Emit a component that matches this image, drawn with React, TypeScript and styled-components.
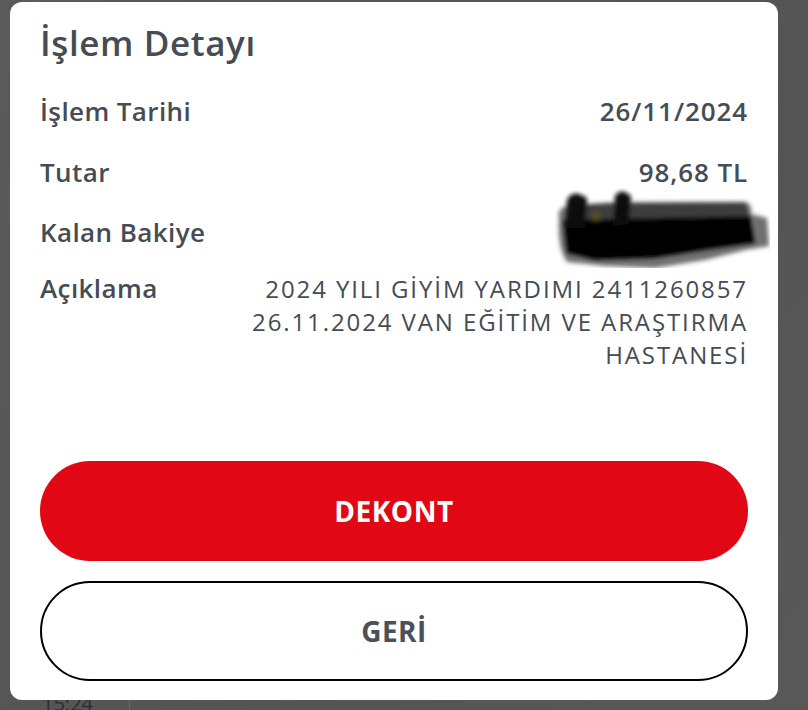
import React from "react";
import styled, { createGlobalStyle } from "styled-components";

const Global = createGlobalStyle`
  html, body { margin: 0; padding: 0; }
  body { background: #565656; font-family: "Open Sans", "Noto Sans", sans-serif; }
`;

const Screen = styled.div`
  position: relative;
  width: 808px;
  height: 710px;
  overflow: hidden;
  background: linear-gradient(135deg, #5a5a5a 0%, #545454 60%, #585858 100%);
`;

const Backdrop = styled.div`
  display: flex;
  flex-direction: column;
  justify-content: flex-end;
  height: 100%;
`;

const BgRow = styled.div`
  display: grid;
  grid-template-columns: 120px 1fr;
  height: 24px;
  margin-left: 10px;
`;

const BgTime = styled.div`
  padding: 4px 0 0 32px;
  font-size: 20px;
  color: #2c2c2c;
  border-right: 1px solid #6a6a6a;
`;

const Modal = styled.div`
  position: absolute;
  left: 10px;
  top: 2px;
  width: 768px;
  height: 698px;
  background: #ffffff;
  border-radius: 12px;
  box-sizing: border-box;
  padding: 19px 30px 0 30px;
  display: flex;
  flex-direction: column;
  color: #454c54;
`;

const Title = styled.h1`
  margin: 0 0 30px 0;
  font-size: 35px;
  font-weight: 600;
  line-height: 44px;
  letter-spacing: 0.6px;
`;

const Rows = styled.div`
  display: flex;
  flex-direction: column;
  gap: 27.5px;
`;

const Row = styled.div<{ $shift?: number }>`
  display: flex;
  justify-content: space-between;
  align-items: baseline;
  margin-top: ${(p) => p.$shift ?? 0}px;
`;

const Label = styled.span`
  font-size: 26px;
  font-weight: 600;
  line-height: 33px;
  letter-spacing: 0.4px;
  white-space: nowrap;
`;

const Value = styled.span`
  font-size: 26px;
  font-weight: 600;
  line-height: 33px;
  letter-spacing: 0.9px;
  white-space: nowrap;
`;

const Description = styled.span`
  font-size: 24px;
  font-weight: 400;
  line-height: 33px;
  letter-spacing: 1.9px;
  text-align: right;
  max-width: 520px;
`;

const Redacted = styled.div`
  align-self: center;
  width: 215px;
  height: 80px;
  margin: -28px -22px -19px 0;
`;

const Buttons = styled.div`
  margin-top: auto;
  margin-bottom: 19px;
  display: flex;
  flex-direction: column;
  gap: 20px;
`;

const Btn = styled.button<{ $primary?: boolean }>`
  height: 100px;
  border-radius: 50px;
  box-sizing: border-box;
  border: ${(p) => (p.$primary ? "none" : "2px solid #000")};
  background: ${(p) => (p.$primary ? "#e20714" : "#fff")};
  color: ${(p) => (p.$primary ? "#fff" : "#4a5159")};
  font-family: "Open Sans", "Noto Sans", sans-serif;
  font-size: 28px;
  font-weight: 700;
  letter-spacing: 0.5px;
  cursor: pointer;
`;

export default function App() {
  return (
    <>
      <Global />
      <Screen>
        <Backdrop>
          <BgRow>
            <BgTime>15:24</BgTime>
            <div />
          </BgRow>
        </Backdrop>
        <Modal>
          <Title>İşlem Detayı</Title>
          <Rows>
            <Row>
              <Label>İşlem Tarihi</Label>
              <Value>26/11/2024</Value>
            </Row>
            <Row>
              <Label>Tutar</Label>
              <Value>98,68 TL</Value>
            </Row>
            <Row>
              <Label>Kalan Bakiye</Label>
              <Redacted>
                <svg width="215" height="80" viewBox="0 0 215 80">
                  <defs>
                    <filter id="blur" x="-10%" y="-20%" width="120%" height="140%">
                      <feGaussianBlur stdDeviation="2" />
                    </filter>
                  </defs>
                  <g filter="url(#blur)">
                    <path d="M4 30 Q2 20 12 18 L60 14 L190 14 Q198 16 196 26 L212 30 L214 58 L190 62 L150 72 L100 80 L50 78 L12 74 Q2 60 4 30 Z" fill="#333" opacity="0.7" />
                    <path d="M30 16 L190 14 L194 30 L30 32 Z" fill="#3c3c3c" />
                    <path d="M8 32 L100 30 L195 28 L200 55 L150 62 L100 70 L40 72 L12 65 Z" fill="#000" />
                    <path d="M10 40 L12 12 Q16 4 24 6 L32 10 L30 40 Z" fill="#111" />
                    <path d="M58 38 L60 8 Q64 2 70 4 L76 8 L74 36 Z" fill="#111" />
                    <path d="M36 26 L44 22 L46 32 L38 34 Z" fill="#6a5a20" opacity="0.6" />
                  </g>
                </svg>
              </Redacted>
            </Row>
            <Row $shift={-5}>
              <Label>Açıklama</Label>
              <Description>
                2024 YILI GİYİM YARDIMI 2411260857 26.11.2024 VAN EĞİTİM VE ARAŞTIRMA HASTANESİ
              </Description>
            </Row>
          </Rows>
          <Buttons>
            <Btn $primary>DEKONT</Btn>
            <Btn>GERİ</Btn>
          </Buttons>
        </Modal>
      </Screen>
    </>
  );
}
